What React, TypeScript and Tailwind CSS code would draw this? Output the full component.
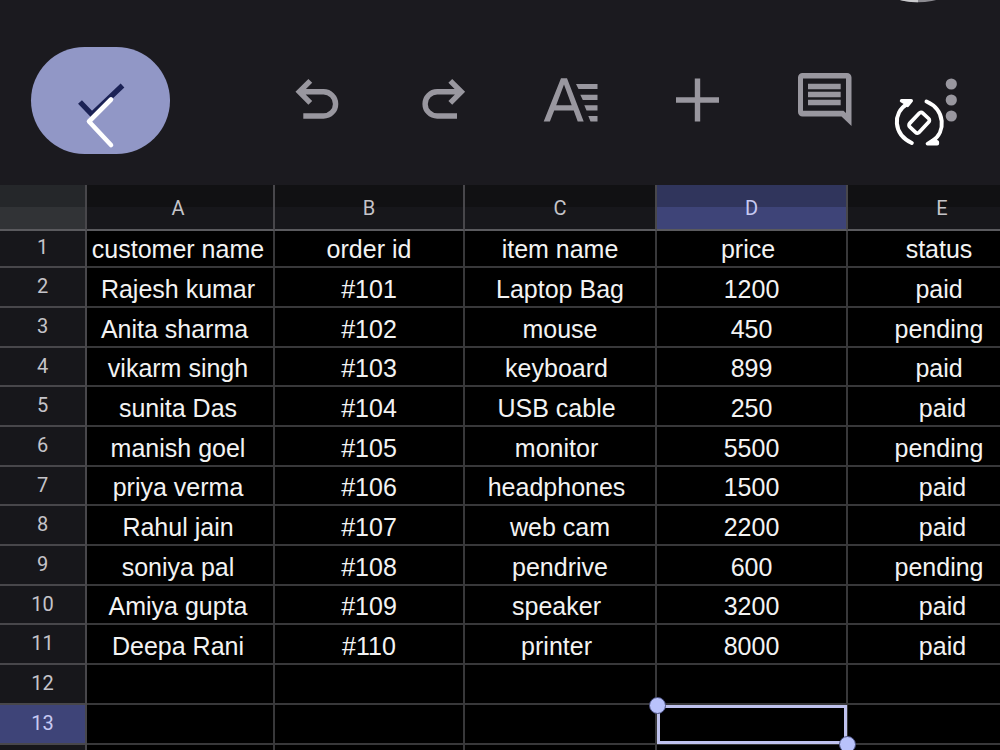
import React from "react";

const ROWS: string[][] = [
  ["customer name", "order id", "item name", "price ", "status "],
  ["Rajesh kumar", "#101", "Laptop Bag", "1200", "paid "],
  ["Anita sharma ", "#102", "mouse", "450", "pending "],
  ["vikarm singh", "#103", "keyboard ", "899", "paid "],
  ["sunita Das", "#104", "USB cable ", "250", "paid"],
  ["manish goel", "#105", "monitor ", "5500", "pending "],
  ["priya verma", "#106", "headphones ", "1500", "paid"],
  ["Rahul jain", "#107", "web cam", "2200", "paid"],
  ["soniya pal", "#108", "pendrive", "600", "pending "],
  ["Amiya gupta", "#109", "speaker ", "3200", "paid"],
  ["Deepa Rani", "#110", "printer ", "8000", "paid"],
  ["", "", "", "", ""],
  ["", "", "", "", ""],
  ["", "", "", "", ""],
];

const COLUMNS = ["A", "B", "C", "D", "E"];
const COLS = "grid grid-cols-[87px_188px_190px_192px_191px_190px]";
const ACTIVE_ROW = 12;
const ACTIVE_COL = 3;

function Toolbar() {
  return (
    <div className="relative h-[185px] shrink-0 bg-[#1b1a1f]">
      <div className="flex h-full items-start pl-[31px] pt-[47px]">
        <div className="h-[107px] w-[139px] rounded-[53.5px] bg-[#9197c6]" />
      </div>
      <svg className="absolute inset-0" width="1000" height="185" viewBox="0 0 1000 185" fill="none">
        <ellipse cx="918" cy="-14" rx="36" ry="16.2" fill="#8b8a90" />
        <path d="M882-14a36 16.200 0 0 0 36 16.200V-14z" fill="#c9c9cc" />

        <path d="M80 102L92 114.500L122.500 85.500" stroke="#1b2255" strokeWidth="5.400" />
        <path d="M111 99.500L89 121.500L111 145" stroke="#fff" strokeWidth="4.600" strokeLinecap="round" strokeLinejoin="round" />

        <g stroke="#99979f" strokeWidth="5.400">
          <path d="M310.300 80.800L299.300 91.800L310.300 102.800M299.500 91.800H323.500A12.100 12.100 0 0 1 323.500 116H303.300" />
          <path d="M450.300 80.800L461.300 91.800L450.300 102.800M461 91.800H437.200A12.100 12.100 0 0 0 437.200 116H457" />
          <path d="M697.500 78.500V121.500M676 100H719" />
        </g>
        <path
          fillRule="evenodd"
          d="M543.700 121.500L561 78.300H567L583.700 121.500H577.700L573.700 110.500H554.200L549.900 121.500zM564 84.500L556.200 105.300H571.700z"
          fill="#99979f"
        />
        <path d="M576 84H597.500V89H578.500zM580.300 94.800H597.500V100H582.800zM584.300 105.300H597.500V110.500H586.500zM588.300 116H597.500V121.500H590.500z" fill="#99979f" />

        <path fillRule="evenodd" d="M802.500 73H847a4.500 4.500 0 0 1 4.500 4.500V126L841.500 116.500H802.500a4.500 4.500 0 0 1-4.500-4.500V77.500a4.500 4.500 0 0 1 4.500-4.500zM803 78.500V110.700H843.500L846 113V78.500z" fill="#99979f" />
        <path d="M808 83.700H840.700V89.300H808zM808 91.800H840.700V97.300H808zM808 99.800H840.700V105.300H808z" fill="#99979f" />

        <g fill="#99979f">
          <circle cx="951.300" cy="84" r="5.600" />
          <circle cx="951.300" cy="100" r="5.600" />
          <circle cx="951.300" cy="116" r="5.600" />
        </g>
        <g stroke="#fff" strokeWidth="4" strokeLinecap="round" strokeLinejoin="round">
          <path d="M911.800 143C893 134 892.500 113 907 104" />
          <path d="M926.500 101.500C945.500 110 946 132 932.500 141" />
          <path d="M901.500 100.800H911.300L907.500 105.500L904.500 102.500Z" fill="#fff" strokeWidth="3.400" />
          <path d="M927.500 143.800H937.300V142L932.500 140.500Z" fill="#fff" strokeWidth="3.600" />
          <rect x="-6.500" y="-9.500" width="13" height="19" rx="2.500" transform="translate(919.200 122.700) rotate(43)" strokeWidth="3.700" />
        </g>
      </svg>
    </div>
  );
}

function HeaderRow() {
  return (
    <div className={`${COLS} h-[46px] shrink-0`}>
      <div className="border-r-2 border-b-2 border-r-[#48474b] border-b-[#5a5a5e] bg-[linear-gradient(#25272a_22px,#313336_22px)]" />
      {COLUMNS.map((name, i) => (
        <div
          key={name}
          className={`flex items-center justify-center border-r-2 border-b-2 border-r-[#48474b] border-b-[#5a5a5e] pt-px font-[Roboto,sans-serif] text-[20px] leading-none ${
            i === ACTIVE_COL
              ? "bg-[linear-gradient(#30355c_22px,#3e4478_22px)] text-[#c7caf3]"
              : "bg-[linear-gradient(#111113_22px,#17171b_22px)] text-[#c5c4c9]"
          } ${i === 0 ? "pr-1" : ""}`}
        >
          <span>{name}</span>
        </div>
      ))}
    </div>
  );
}

function Row({ cells, index }: { cells: string[]; index: number }) {
  const height = index === 0 ? 37.3 : 39.7;
  return (
    <div className={`${COLS} shrink-0`} style={{ height }}>
      <div
        className={`flex justify-center border-r-2 border-b-2 border-r-[#48474b] border-b-[#48474b] font-[Roboto,sans-serif] text-[20px] leading-[20px] ${
          index === 0 ? "pt-[6px]" : "pt-[8px]"
        } ${index === ACTIVE_ROW ? "bg-[#3e4478] text-[#c7caf3]" : "bg-[#17171b] text-[#c5c4c9]"}`}
      >
        {index < 13 ? index + 1 : ""}
      </div>
      {cells.map((text, i) => (
        <div
          key={i}
          className={`flex justify-center whitespace-pre border-r-2 border-b-2 border-[#38383a] bg-black text-[25px] leading-[28px] text-[#f3f3f3] ${
            index === 0 ? "pt-[4px]" : "pt-[6.6px]"
          } ${i === 0 ? "pr-1" : i === 4 ? "pl-px" : ""}`}
        >
          {text}
        </div>
      ))}
    </div>
  );
}

function Selection() {
  return (
    <div className="absolute left-[657px] top-[705px] h-[39px] w-[190px] border-[3px] border-[#bfc2ee]">
      <div className="absolute -left-[11px] -top-[11px] size-[17px] rounded-full border border-[#4a5080] bg-[#b9c2fb]" />
      <div className="absolute -bottom-[12px] -right-[12px] size-[17px] rounded-full border border-[#4a5080] bg-[#b9c2fb]" />
    </div>
  );
}

export default function App() {
  return (
    <div className="relative flex h-[750px] w-[1000px] flex-col overflow-hidden bg-black font-['Liberation_Sans',Arial,sans-serif]">
      <Toolbar />
      <HeaderRow />
      {ROWS.map((cells, i) => (
        <Row key={i} cells={cells} index={i} />
      ))}
      <Selection />
    </div>
  );
}
